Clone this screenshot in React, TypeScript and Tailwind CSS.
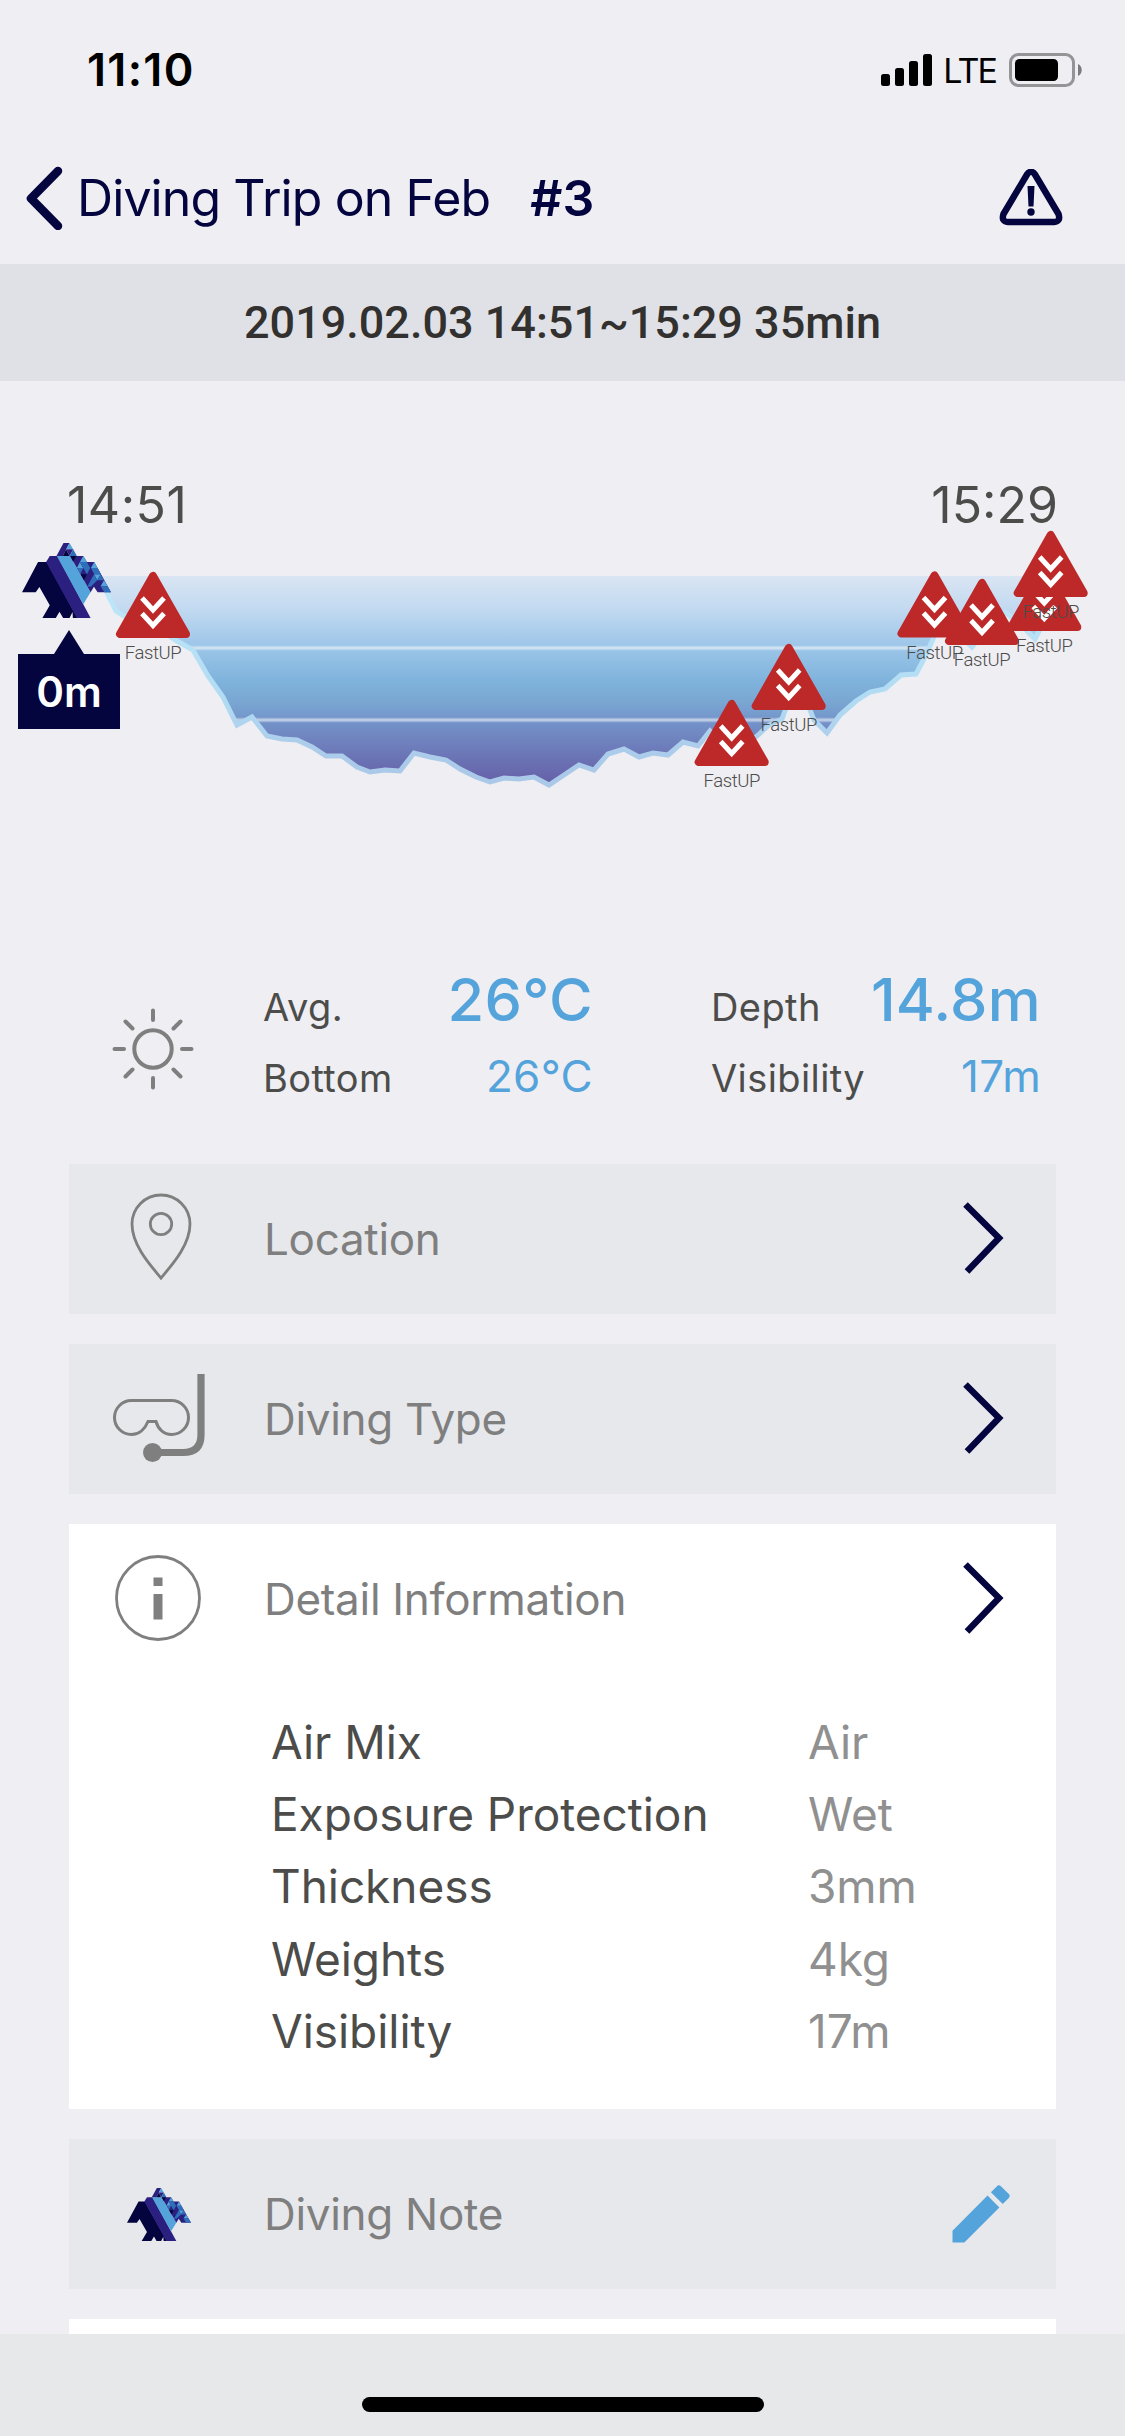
import type { ReactNode } from "react";
import { MdEdit } from "react-icons/md";

type Point = [number, number];

// dive profile, in chart coordinates
const profile: Point[] = [
  [88, 576], [100, 578], [108, 595], [116, 611], [124, 616], [140, 622], [160, 630], [177, 641],
  [193, 650], [208, 676], [223, 697], [237, 725], [252, 717], [267, 736], [282, 739], [297, 740],
  [312, 747], [326, 756], [342, 756], [357, 767], [370, 772], [385, 770], [400, 771], [414, 753],
  [430, 757], [446, 760], [460, 769], [476, 777], [490, 782], [504, 778], [519, 779], [534, 777],
  [549, 785], [564, 775], [579, 765], [594, 770], [608, 754], [624, 749], [639, 757], [653, 753],
  [668, 755], [683, 742], [698, 746], [710, 731], [732, 752], [757, 736], [769, 725], [782, 719],
  [789, 700], [806, 700], [814, 720], [827, 733], [840, 715], [856, 701], [870, 692], [885, 689],
  [901, 675], [916, 674], [925, 657], [934, 637], [945, 615], [958, 634], [972, 647], [986, 630],
  [1005, 612], [1020, 624], [1035, 639], [1046, 618], [1050, 576],
];

const alerts: Point[] = [
  [153, 572],
  [731.7, 700],
  [788.7, 644],
  [934.5, 571.5],
  [982, 579],
  [1044.3, 565],
  [1050.7, 531],
];

const details = [
  { label: "Air Mix", value: "Air" },
  { label: "Exposure Protection", value: "Wet" },
  { label: "Thickness", value: "3mm" },
  { label: "Weights", value: "4kg" },
  { label: "Visibility", value: "17m" },
];

function Logo({ className }: { className?: string }) {
  return (
    <svg className={className} viewBox="65 69 266 225" preserveAspectRatio="none">
      <path fill="#04043f" d="M113 126h26l92 168h-14l-1-18-9 18h-19l-11-19-11 19h-40l22-38-31-55-11 16H65z" />
      <path fill="#2b2080" d="M148 108h23l99 186h-41L137 126z" />
      <path fill="#54a4db" d="M169 108h40l61 109-22 36z" />
      {/* head */}
      <path fill="#2b2080" d="M189 69h18l-20 39h-19z" />
      <path fill="#54a4db" d="M207 69l11 19h-21z" />
      <path fill="#04043f" d="M197 88l10 20h-20z" />
      <path fill="#2b2080" d="M197 88h21l-11 20z" />
      <path fill="#2f6fba" d="M218 88l11 20h-22z" />
      {/* right wing */}
      <path fill="#2b2080" d="M209 108h39l11 18h22l50 91h-40l-11-17-10 17z" />
      <path fill="#04043f" d="M209 108h18l-9 17zM240 163h19l-9 18z" />
      <path fill="#54a4db" d="M248 108l-10 18h21zM238 126l-9 18h19zM281 126l-10 18h20zM300 163l-20 0 10 18zM310 181l-10 18h21z" />
      <path fill="#2f6fba" d="M238 126h21l-11 18zM230 144h18l-9 18zM259 126l10 18h-21zM248 144h21l-10 19zM271 144h20l-10 19zM291 144l10 19h-20zM280 163l-20 37 10 0 20-19zM300 163l10 18h-20zM321 199l10 18h-20l-11-18z" />
    </svg>
  );
}

function FastUp({ at: [x, y] }: { at: Point }) {
  return (
    <g transform={`translate(${x} ${y})`}>
      <path
        d="M0 4L-33 62H33Z"
        fill="#bd2828"
        stroke="#bd2828"
        strokeWidth="8"
        strokeLinejoin="round"
      />
      <path d="M-11 26L0 38L11 26M-11 41.5L0 53.5L11 41.5" fill="none" stroke="#fff" strokeWidth="5" />
      <text
        y="87"
        textAnchor="middle"
        fill="#4c4c4a"
        className="font-['Roboto',sans-serif] text-[18.5px] font-light tracking-[-0.4px]"
      >
        FastUP
      </text>
    </g>
  );
}

function DiveChart() {
  const line = profile.map(([x, y]) => `${x},${y}`).join(" ");
  return (
    <svg className="block h-[380px] w-full" viewBox="0 530 1125 380">
      <defs>
        <linearGradient id="water" gradientUnits="userSpaceOnUse" x1="0" y1="576" x2="0" y2="787">
          <stop offset="0" stopColor="#dae5f3" />
          <stop offset="0.15" stopColor="#c3daf1" />
          <stop offset="0.34" stopColor="#9bc5e8" />
          <stop offset="0.5" stopColor="#7fb3dc" />
          <stop offset="0.6" stopColor="#79a6d2" />
          <stop offset="0.7" stopColor="#7391c8" />
          <stop offset="0.86" stopColor="#6b74b5" />
          <stop offset="1" stopColor="#655da6" />
        </linearGradient>
        <linearGradient id="floor" gradientUnits="userSpaceOnUse" x1="0" y1="576" x2="0" y2="787">
          <stop offset="0" stopColor="#c0e8fa" />
          <stop offset="0.6" stopColor="#b1dbf3" />
          <stop offset="0.8" stopColor="#accdeb" />
          <stop offset="1" stopColor="#aac8e8" />
        </linearGradient>
        <clipPath id="body">
          <polygon points={line} />
        </clipPath>
      </defs>
      <polygon points={line} fill="url(#water)" />
      <g clipPath="url(#body)" stroke="#fff">
        <path d="M0 648H1125M0 720H1125" strokeOpacity="0.3" strokeWidth="4.5" />
        <path d="M0 648H1125M0 720H1125" strokeOpacity="0.3" strokeWidth="2" />
      </g>
      <polyline points={profile.slice(1, -1).map((p) => p.join()).join(" ")} fill="none" stroke="url(#floor)" strokeWidth="5" />
      {alerts.map((a) => (
        <FastUp key={a.join()} at={a} />
      ))}
    </svg>
  );
}

function Stat({ label, value, large }: { label: string; value: string; large?: boolean }) {
  return (
    <div className="flex items-baseline justify-between">
      <span className="text-[38px] tracking-[0.4px] text-[#4c4c4a]">{label}</span>
      <span
        className={
          large
            ? "text-[59.5px] font-medium tracking-[0.3px] text-[#54a4db]"
            : "text-[44px] tracking-[0.3px] text-[#54a4db]"
        }
      >
        {value}
      </span>
    </div>
  );
}

function Chevron() {
  return (
    <svg className="-mt-[2px] mr-[51px] h-[72px] w-[42px]" viewBox="0 0 42 72" fill="none" stroke="#04043f" strokeWidth="6.500">
      <path d="M2.500 2.500L36 36L4 69.500" />
    </svg>
  );
}

function Row({ icon, title, action }: { icon: ReactNode; title: string; action: ReactNode }) {
  return (
    <div className="flex h-[150px] items-center">
      <div className="w-[195px] shrink-0">{icon}</div>
      <h2 className="flex-1 text-[44px] tracking-[-0.3px] text-[#7f7f7f]">{title}</h2>
      {action}
    </div>
  );
}

export default function App() {
  return (
    <main className="flex h-[2436px] w-[1125px] flex-col overflow-hidden bg-[#efeef3] font-['Inter',sans-serif] leading-none">
      {/* Status bar */}
      <div className="flex h-[132px] shrink-0 items-start justify-between pt-[47px] pr-[42px] pl-[87px]">
        <span className="text-[45px] font-semibold tracking-[1.3px] text-black">11:10</span>
        <div className="flex items-center pt-[5px]">
          <svg className="h-8 w-[52px]" viewBox="0 0 52 32">
            <rect x="0" y="20" width="9" height="12" rx="2.500" />
            <rect x="14" y="14" width="9" height="18" rx="2.500" />
            <rect x="28" y="7" width="9" height="25" rx="2.500" />
            <rect x="42" y="0" width="9" height="32" rx="2.500" />
          </svg>
          <span className="mt-[2px] ml-[10px] text-[34px] tracking-[-1.9px]">LTE</span>
          <svg className="ml-[13px] h-[34px] w-[74px]" viewBox="0 0 74 34">
            <rect x="1.500" y="1.500" width="63" height="31" rx="8" fill="none" stroke="#949497" strokeWidth="3" />
            <rect x="6" y="6" width="43" height="22" rx="4.500" />
            <path d="M69 11v12c5-2 5-10 0-12z" fill="#7c7c7f" />
          </svg>
        </div>
      </div>

      {/* Title bar */}
      <header className="flex h-[132px] shrink-0 items-center pr-[62px] pl-[25px] text-[#04043f]">
        <svg className="h-16 w-[38px]" viewBox="0 0 38 64" fill="none" stroke="currentColor" strokeWidth="8.500" strokeLinecap="round" strokeLinejoin="round">
          <path d="M33 5L6 32.500L33 60" />
        </svg>
        <h1 className="ml-[14px] text-[50px] tracking-[-0.9px]">Diving Trip on Feb</h1>
        <span className="ml-[40px] text-[50px] font-semibold">#3</span>
        <svg className="ml-auto h-[58px] w-[64px]" viewBox="0 0 64 58" fill="none" stroke="currentColor">
          <path d="M28 5.500Q32 0 36 5.500L59.500 45Q62 52.500 55 53H9Q2 52.500 4.500 45Z" strokeWidth="6.500" strokeLinejoin="round" />
          <path d="M28.500 17h7l-1 20.500h-5z" fill="currentColor" stroke="none" />
          <circle cx="32" cy="43" r="3.700" fill="currentColor" stroke="none" />
        </svg>
      </header>

      <div className="flex h-[117px] shrink-0 items-center justify-center bg-[#e0e1e6] font-['Roboto',sans-serif] text-[45px] font-medium text-[#32312f]">
        2019.02.03 14:51~15:29 35min
      </div>

      {/* Depth chart */}
      <section className="relative shrink-0">
        <div className="flex h-[149px] items-end justify-between pr-[67px] pl-[67px] text-[50px] text-[#4c4c4a]">
          <span className="tracking-[0.5px]">14:51</span>
          <span>15:29</span>
        </div>
        <DiveChart />
        <Logo className="absolute top-[162px] left-[21.5px] h-[75px] w-[89px]" />
        <div className="absolute top-[249px] left-[18px] flex w-[102px] flex-col items-center">
          <svg className="h-6 w-[30px]" viewBox="0 0 30 24" fill="#04043f">
            <path d="M15 0L30 24H0z" />
          </svg>
          <div className="flex h-[75px] w-full items-center justify-center bg-[#04043f] text-[42px] font-semibold text-white">
            0m
          </div>
        </div>
      </section>

      {/* Conditions */}
      <section className="flex h-[254px] shrink-0 pt-[60px] pr-[84px] pl-[111px]">
        <svg className="mt-[37px] h-[84px] w-[84px] shrink-0" viewBox="-42 -42 84 84" fill="none" stroke="#7f7f7f" strokeWidth="4" strokeLinecap="round">
          <circle r="18.700" />
          <path d="M0 -38.500V-29M0 29V38.500M-38.500 0H-29M29 0H38.500M-27.500 -27.500L-20.500 -20.500M27.500 -27.500L20.500 -20.500M-27.500 27.500L-20.500 20.500M27.500 27.500L20.500 20.500" />
        </svg>
        <div className="ml-[68px] flex w-[330px] flex-col gap-[24px]">
          <Stat label="Avg." value="26°C" large />
          <Stat label="Bottom" value="26°C" />
        </div>
        <div className="ml-[118px] flex w-[330px] flex-col gap-[24px]">
          <Stat label="Depth" value="14.8m" large />
          <Stat label="Visibility" value="17m" />
        </div>
      </section>

      {/* Cards */}
      <section className="flex h-[1170px] shrink-0 flex-col gap-[30px] overflow-hidden px-[69px]">
        <div className="bg-[#e7e8ec]">
          <Row
            title="Location"
            action={<Chevron />}
            icon={
              <svg className="-mt-[4px] ml-[60px] h-[88px] w-[64px]" viewBox="0 0 64 88" fill="none" stroke="#7f7f7f" strokeWidth="2.800">
                <path d="M32 85C23 74 3 53 3 31A29 29 0 0 1 61 31C61 53 41 74 32 85Z" />
                <circle cx="32" cy="31" r="10.700" />
              </svg>
            }
          />
        </div>
        <div className="bg-[#e7e8ec]">
          <Row
            title="Diving Type"
            action={<Chevron />}
            icon={
              <svg className="-mt-[3px] ml-[43px] h-[90px] w-[94px]" viewBox="112 1372 94 90" fill="none" stroke="#7f7f7f">
                <path strokeWidth="3" d="M131.500 1399.500H171.500A17 17 0 0 1 171.500 1433.500C164 1433.500 158 1428 156 1420.500H148C145 1428 139 1433.500 131.500 1433.500A17 17 0 0 1 131.500 1399.500Z" />
                <path strokeWidth="7.200" d="M201 1373V1434Q201 1451.500 183 1451.500H152" />
                <circle cx="152.500" cy="1451.500" r="9.500" fill="#7f7f7f" stroke="none" />
              </svg>
            }
          />
        </div>
        <div className="h-[585px] shrink-0 bg-white">
          <Row
            title="Detail Information"
            action={<Chevron />}
            icon={
              <svg className="-mt-[2px] ml-[45px] h-[88px] w-[88px]" viewBox="0 0 88 88" fill="#7f7f7f">
                <circle cx="44" cy="44" r="41.500" fill="none" stroke="#7f7f7f" strokeWidth="2.800" />
                <path d="M39.500 23.500h9v8.500h-9zM39.500 40h9v25.500h-9z" />
              </svg>
            }
          />
          <dl className="pt-[32px] pl-[202px] text-[46px] leading-[72.2px] tracking-[-0.05px]">
            {details.map((d) => (
              <div key={d.label} className="flex">
                <dt className="w-[537px] text-[#4c4c4a]">{d.label}</dt>
                <dd className="text-[#909090]">{d.value}</dd>
              </div>
            ))}
          </dl>
        </div>
        <div className="bg-[#e7e8ec]">
          <Row
            title="Diving Note"
            action={<MdEdit className="mr-[37px] size-[76px] text-[#54a4db]" />}
            icon={<Logo className="ml-[58px] h-[53px] w-[64px]" />}
          />
        </div>
        <div className="h-[150px] shrink-0 bg-white" />
      </section>

      {/* Home indicator */}
      <footer className="flex flex-1 justify-center bg-[#e7e8ea] pt-[63px]">
        <div className="h-[15px] w-[402px] rounded-full bg-black" />
      </footer>
    </main>
  );
}
